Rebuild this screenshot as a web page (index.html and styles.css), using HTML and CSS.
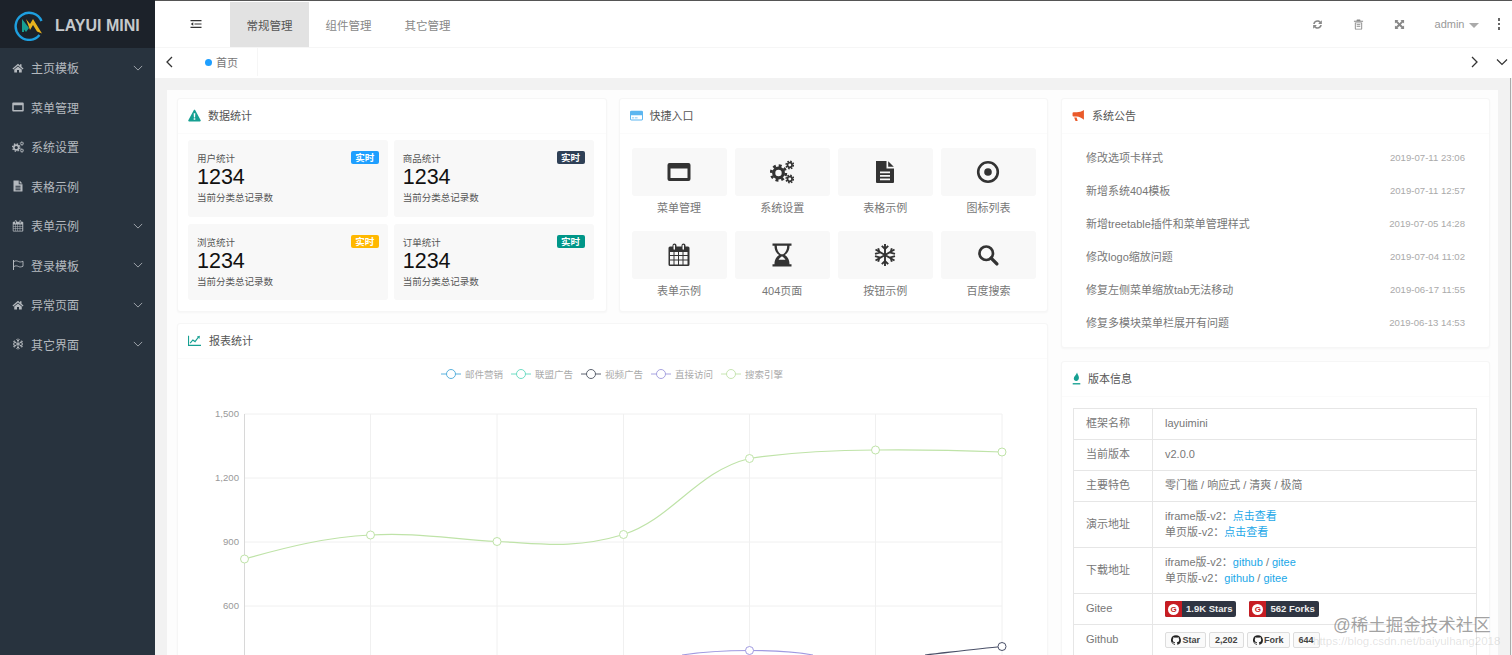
FILE: index.html
```html
<!DOCTYPE html>
<html>
<head>
    <title>layuimini</title>
    <link rel="stylesheet" href="styles.css">
</head>
<body>
    <svg class="icon-defs" xmlns="http://www.w3.org/2000/svg">
        <symbol id="i-home" viewBox="0 0 24 24"><path d="M12 3.5 1 13l1.5 1.8L12 6.8l9.5 8L23 13l-4-3.4V4.5h-3v2.5zM4.5 15.2V21h5.5v-5h4v5h5.500v-5.800L12 9z"/></symbol>
        <symbol id="i-window" viewBox="0 0 24 24"><path fill-rule="evenodd" d="M2.500 3h19A2 2 0 0 1 23.500 5v14a2 2 0 0 1-2 2h-19a2 2 0 0 1-2-2V5a2 2 0 0 1 2-2zM3.500 8.500v9.500h17V8.500z"/></symbol>
        <symbol id="i-gears" viewBox="0 0 24 24">
            <g fill="none" stroke="currentColor">
                <circle cx="8.500" cy="13" r="4.800" stroke-width="3.200"/>
                <circle cx="8.500" cy="13" r="7.300" stroke-width="2.800" stroke-dasharray="2.900 2.830"/>
                <circle cx="19.800" cy="5" r="2.300" stroke-width="1.700"/>
                <circle cx="19.800" cy="5" r="3.700" stroke-width="1.500" stroke-dasharray="1.600 1.300"/>
                <circle cx="19.800" cy="19" r="2.300" stroke-width="1.700"/>
                <circle cx="19.800" cy="19" r="3.700" stroke-width="1.500" stroke-dasharray="1.600 1.300"/>
            </g>
        </symbol>
        <symbol id="i-file" viewBox="0 0 24 24"><path fill-rule="evenodd" d="M3 1h10.500v7.500H21V22a1 1 0 0 1-1 1H4a1 1 0 0 1-1-1zM7 11.500v1.800h10v-1.800zM7 15v1.800h10V15zM7 18.500v1.800h10v-1.800z"/><path d="M15.200 1.200 20.800 6.800h-5.600z"/></symbol>
        <symbol id="i-target" viewBox="0 0 24 24"><circle cx="12" cy="12" r="9.800" fill="none" stroke="currentColor" stroke-width="2.600"/><circle cx="12" cy="12" r="3.800"/></symbol>
        <symbol id="i-calendar" viewBox="0 0 24 24"><path fill-rule="evenodd" d="M3 3.500h2.500v-1a2 2 0 0 1 4 0v1h5v-1a2 2 0 0 1 4 0v1H21a1.500 1.500 0 0 1 1.500 1.500v16.500A1.500 1.500 0 0 1 21 23H3a1.500 1.500 0 0 1-1.500-1.500V5A1.500 1.500 0 0 1 3 3.500zM6.500 2.500V6a.5.5 0 0 0 1.500 0V2.500a.5.5 0 0 0-1.500 0zM15.500 2.500V6a.5.5 0 0 0 1.500 0V2.500a.5.5 0 0 0-1.500 0zM3 9v3h3.500V9zM7.500 9v3H11V9zM12 9v3h3.500V9zM16.500 9v3H20.500V9zM3 13v3.500h3.500V13zM7.500 13v3.500H11V13zM12 13v3.500h3.500V13zM16.500 13v3.500H20.500V13zM3 17.500v4h3.500v-4zM7.500 17.500v4H11v-4zM12 17.500v4h3.500v-4zM16.500 17.500v4H20.500v-4z"/></symbol>
        <symbol id="i-hourglass" viewBox="0 0 24 24"><path fill-rule="evenodd" d="M2.500 .5h19v2.200H19.500c0 4.800-2 7.300-4.600 9.300 2.600 2 4.600 4.500 4.600 9.300h2V23.500h-19v-2.200h2c0-4.800 2-7.300 4.600-9.300-2.600-2-4.600-4.500-4.600-9.300h-2zM6.800 2.700c0 4 1.500 6.800 4 8.500h2.400c2.500-1.700 4-4.500 4-8.500zM12 13.200c-1.200.8-2.700 2-3.500 3.600h7c-.8-1.600-2.300-2.800-3.500-3.600z"/></symbol>
        <symbol id="i-snow" viewBox="0 0 24 24">
            <g fill="none" stroke="currentColor" stroke-width="1.900">
                <path d="M12 1v22M2.500 6.500l19 11M21.500 6.500l-19 11"/>
                <path d="M8.800 2.800 12 6l3.200-3.200M8.800 21.200 12 18l3.200 3.200M2 10.800l4.400-1.200L5.200 5.200M22 13.200l-4.400 1.200 1.200 4.400M22 10.800l-4.400-1.200 1.200-4.400M2 13.200l4.400 1.200-1.200 4.400"/>
            </g>
        </symbol>
        <symbol id="i-search" viewBox="-1.500 -1.500 27 27"><g fill="none" stroke="currentColor"><circle cx="10" cy="10" r="7.600" stroke-width="3"/><path d="M15.500 15.500 22 22" stroke-width="3.800" stroke-linecap="round"/></g></symbol>
        <symbol id="i-flag" viewBox="0 0 24 24"><path d="M2 2h2v20H2z"/><path fill="none" stroke="currentColor" stroke-width="1.800" d="M4 5c3-2 6-1.500 9 0s5.500 1 9-.5v10c-3.500 1.500-6 2-9 .5s-6-2-9 0"/></symbol>
        <symbol id="i-down" viewBox="0 0 24 24"><path fill="none" stroke="currentColor" stroke-width="2" d="M2 7l10 10L22 7"/></symbol>
        <symbol id="i-warn" viewBox="0 0 24 24"><path fill-rule="evenodd" d="M12 1.500c.6 0 1.100.3 1.400.8l10 18.500c.5 1-.2 2.200-1.400 2.200H2c-1.200 0-1.900-1.200-1.400-2.200l10-18.500c.3-.5.8-.8 1.400-.8zM10.500 8l.4 7.500h2.200l.4-7.500zM10.500 17v3h3v-3z"/></symbol>
        <symbol id="i-card" viewBox="0 0 24 24"><path fill-rule="evenodd" d="M2.500 3h19A2.500 2.500 0 0 1 24 5.500v13a2.500 2.500 0 0 1-2.500 2.500h-19A2.500 2.500 0 0 1 0 18.500v-13A2.500 2.500 0 0 1 2.500 3zM1.800 11.500v7c0 .4.300.7.700.7h19c.4 0 .7-.3.700-.7v-7zM3.500 15.500h4v1.800h-4zM9 15.500h5v1.800H9z"/></symbol>
        <symbol id="i-horn" viewBox="0 0 24 24"><path d="M22 2v18c-4-3.500-9-6-13-6H3a2 2 0 0 1-2-2V8a2 2 0 0 1 2-2h6c4 0 9-1 13-4zM4 15.500h4.500l2 6.500H6.500z"/></symbol>
        <symbol id="i-fire" viewBox="0 0 14 24"><path d="M8 1c.5 3.500 3.500 5.500 3.500 9.500 0 3.500-2.300 6-5 6s-4.500-2-4.500-4.500C2 8.500 6.500 6 8 1z"/><path d="M0 20.500h14V23H0z"/></symbol>
        <symbol id="i-line" viewBox="0 0 24 24"><path d="M0 3h2v17h22v2H0z"/><path fill="none" stroke="currentColor" stroke-width="2.200" d="M4 17l5-6 4 3 6-8"/><path d="M16.500 4.500 22 3l-1 6z"/></symbol>
        <symbol id="i-indent" viewBox="0 0 24 24"><path d="M1 4h22v2.500H1zM9 10.800h14v2.400H9zM1 17.500h22V20H1zM6.500 8.500v7L1.500 12z"/></symbol>
        <symbol id="i-refresh" viewBox="0 0 24 24"><path d="M12 2.500c2.700 0 5.100 1.100 6.800 2.900L21.500 2.800V11h-8.200l3-3c-1-1.200-2.600-2-4.300-2-2.900 0-5.300 2-5.900 4.700H2.500C3.200 6 7.100 2.500 12 2.500zM2.500 13h8.200l-3 3c1 1.200 2.600 2 4.300 2 2.900 0 5.300-2 5.900-4.700h3.600c-.7 4.700-4.600 8.200-9.500 8.200-2.700 0-5.100-1.100-6.800-2.900L2.500 21.200z"/></symbol>
        <symbol id="i-trash" viewBox="0 0 24 24"><path fill-rule="evenodd" d="M8.500 1h7l1 3H22v2H2V4h5.500zM4 7.500h16V21a2 2 0 0 1-2 2H6a2 2 0 0 1-2-2zM6 9.500V21h12V9.500zM8 11.500h8v2H8zM8 15h8v2H8z"/></symbol>
        <symbol id="i-expand" viewBox="0 0 24 24"><path d="M2 2h8L7.500 4.500l4.500 4.500 4.500-4.500L14 2h8v8l-2.500-2.500L15 12l4.500 4.500L22 14v8h-8l2.500-2.500L12 15l-4.500 4.500L10 22H2v-8l2.500 2.500L9 12 4.500 7.500 2 10z"/></symbol>
        <symbol id="i-github" viewBox="0 0 16 16"><path d="M8 .2a8 8 0 0 0-2.500 15.600c.4.100.5-.2.500-.4v-1.400c-2.200.5-2.700-1-2.700-1-.4-.9-.9-1.200-.9-1.200-.7-.5.100-.5.100-.5.800.1 1.200.8 1.200.8.700 1.200 1.900.9 2.300.7.100-.5.300-.9.500-1.100-1.800-.2-3.600-.9-3.600-4 0-.9.300-1.600.8-2.100-.1-.2-.4-1 .1-2.100 0 0 .7-.2 2.200.8a7.600 7.600 0 0 1 4 0c1.500-1 2.200-.8 2.200-.8.400 1.100.2 1.900.1 2.100.5.600.8 1.300.8 2.100 0 3.100-1.900 3.700-3.700 3.900.3.300.6.800.6 1.500v2.200c0 .2.100.5.600.4A8 8 0 0 0 8 .2z"/></symbol>
    </svg>

    <div class="layout">
        <aside class="sidebar">
            <div class="logo">
                <svg class="logo-mark" viewBox="0 0 30 30">
                    <path d="M27.500 10A13.500 13.500 0 1 0 25.500 24" fill="none" stroke="#1e9fdf" stroke-width="2.400"/>
                    <path d="M8 21V8l7 9 -3 4 -2-2.500V21z" fill="#17a092"/>
                    <path d="M12 8l4 5 3-5 9 14.500-5-2-4-6.500-3 5z" fill="#e8b21e"/>
                </svg>
                <span class="logo-text">LAYUI MINI</span>
            </div>
            <ul class="side-menu">
                <li class="side-item"><svg class="side-icon"><use href="#i-home"/></svg><span>主页模板</span><svg class="side-arrow"><use href="#i-down"/></svg></li>
                <li class="side-item"><svg class="side-icon"><use href="#i-window"/></svg><span>菜单管理</span></li>
                <li class="side-item"><svg class="side-icon"><use href="#i-gears"/></svg><span>系统设置</span></li>
                <li class="side-item"><svg class="side-icon"><use href="#i-file"/></svg><span>表格示例</span></li>
                <li class="side-item"><svg class="side-icon"><use href="#i-calendar"/></svg><span>表单示例</span><svg class="side-arrow"><use href="#i-down"/></svg></li>
                <li class="side-item"><svg class="side-icon"><use href="#i-flag"/></svg><span>登录模板</span><svg class="side-arrow"><use href="#i-down"/></svg></li>
                <li class="side-item"><svg class="side-icon"><use href="#i-home"/></svg><span>异常页面</span><svg class="side-arrow"><use href="#i-down"/></svg></li>
                <li class="side-item"><svg class="side-icon"><use href="#i-snow"/></svg><span>其它界面</span><svg class="side-arrow"><use href="#i-down"/></svg></li>
            </ul>
        </aside>

        <div class="main">
            <header class="topbar">
                <div class="toggle"><svg class="toggle-icon"><use href="#i-indent"/></svg></div>
                <a class="top-tab active">常规管理</a>
                <a class="top-tab">组件管理</a>
                <a class="top-tab">其它管理</a>
                <div class="top-right">
                    <svg class="top-icon"><use href="#i-refresh"/></svg>
                    <svg class="top-icon"><use href="#i-trash"/></svg>
                    <svg class="top-icon"><use href="#i-expand"/></svg>
                    <span class="admin">admin<i class="caret"></i></span>
                    <span class="dots"><i></i><i></i><i></i></span>
                </div>
            </header>

            <div class="tabbar">
                <div class="tab-prev"><svg viewBox="0 0 12 12"><path d="M8 1 3 6l5 5" fill="none" stroke="currentColor" stroke-width="1.300"/></svg></div>
                <div class="home-tab"><i class="dot"></i>首页</div>
                <div class="tab-next"><svg viewBox="0 0 12 12"><path d="M4 1l5 5-5 5" fill="none" stroke="currentColor" stroke-width="1.300"/></svg></div>
                <div class="tab-down"><svg viewBox="0 0 12 12"><path d="M1 3.500l5 5 5-5" fill="none" stroke="currentColor" stroke-width="1.200"/></svg></div>
            </div>

            <div class="content">
                <div class="panel">
                    <div class="left-col">
                        <div class="top-cards">
                            <section class="card">
                                <div class="card-head"><svg class="head-icon teal"><use href="#i-warn"/></svg>数据统计</div>
                                <div class="stats">
                                    <div class="stat">
                                        <span class="badge blue">实时</span>
                                        <div class="stat-title">用户统计</div>
                                        <div class="stat-num">1234</div>
                                        <div class="stat-sub">当前分类总记录数</div>
                                    </div>
                                    <div class="stat">
                                        <span class="badge navy">实时</span>
                                        <div class="stat-title">商品统计</div>
                                        <div class="stat-num">1234</div>
                                        <div class="stat-sub">当前分类总记录数</div>
                                    </div>
                                    <div class="stat">
                                        <span class="badge yellow">实时</span>
                                        <div class="stat-title">浏览统计</div>
                                        <div class="stat-num">1234</div>
                                        <div class="stat-sub">当前分类总记录数</div>
                                    </div>
                                    <div class="stat">
                                        <span class="badge green">实时</span>
                                        <div class="stat-title">订单统计</div>
                                        <div class="stat-num">1234</div>
                                        <div class="stat-sub">当前分类总记录数</div>
                                    </div>
                                </div>
                            </section>

                            <section class="card">
                                <div class="card-head"><svg class="head-icon blue-text"><use href="#i-card"/></svg>快捷入口</div>
                                <div class="shortcuts">
                                    <a class="shortcut"><span class="tile"><svg class="tile-icon"><use href="#i-window"/></svg></span>菜单管理</a>
                                    <a class="shortcut"><span class="tile"><svg class="tile-icon"><use href="#i-gears"/></svg></span>系统设置</a>
                                    <a class="shortcut"><span class="tile"><svg class="tile-icon"><use href="#i-file"/></svg></span>表格示例</a>
                                    <a class="shortcut"><span class="tile"><svg class="tile-icon"><use href="#i-target"/></svg></span>图标列表</a>
                                    <a class="shortcut"><span class="tile"><svg class="tile-icon"><use href="#i-calendar"/></svg></span>表单示例</a>
                                    <a class="shortcut"><span class="tile"><svg class="tile-icon"><use href="#i-hourglass"/></svg></span>404页面</a>
                                    <a class="shortcut"><span class="tile"><svg class="tile-icon"><use href="#i-snow"/></svg></span>按钮示例</a>
                                    <a class="shortcut"><span class="tile"><svg class="tile-icon"><use href="#i-search"/></svg></span>百度搜索</a>
                                </div>
                            </section>
                        </div>

                        <section class="card chart-card">
                            <div class="card-head"><svg class="head-icon teal"><use href="#i-line"/></svg><span class="chart-title">报表统计</span></div>
                            <svg class="chart" viewBox="0 0 871 296">
                                <g class="grid-lines">
                                    <path d="M67.500 55H825M67.500 119H825M67.500 183H825M67.500 247H825"/>
                                    <path d="M193.500 55V296M320 55V296M446.500 55V296M572.500 55V296M698.500 55V296M825 55V296"/>
                                </g>
                                <path class="axis" d="M67.500 55V296"/>
                                <g class="axis-text">
                                    <text x="62" y="58">1,500</text>
                                    <text x="62" y="122">1,200</text>
                                    <text x="62" y="186">900</text>
                                    <text x="62" y="250">600</text>
                                </g>

                                <g class="legend">
                                    <path d="M264 15h20" stroke="#5ab1dd"/><circle cx="274" cy="15" r="4.500" stroke="#5ab1dd"/><text x="288" y="18.500">邮件营销</text>
                                    <path d="M334 15h20" stroke="#6fdcc4"/><circle cx="344" cy="15" r="4.500" stroke="#6fdcc4"/><text x="358" y="18.500">联盟广告</text>
                                    <path d="M404 15h20" stroke="#5c6370"/><circle cx="414" cy="15" r="4.500" stroke="#5c6370"/><text x="428" y="18.500">视频广告</text>
                                    <path d="M474 15h20" stroke="#a7a3e0"/><circle cx="484" cy="15" r="4.500" stroke="#a7a3e0"/><text x="498" y="18.500">直接访问</text>
                                    <path d="M544 15h20" stroke="#c7e5b2"/><circle cx="554" cy="15" r="4.500" stroke="#c7e5b2"/><text x="568" y="18.500">搜索引擎</text>
                                </g>

                                <path class="series green-line" d="M67.500 200C110 188 150 178 193.500 176C235 173 275 180 320 182.500C360 184 395 191 446.500 175.500C495 160 520 112 572.500 99.500C615 93 655 91 698.500 91C740 90.500 785 91.500 825 93"/>
                                <g class="points green-line">
                                    <circle cx="67.500" cy="200" r="4"/>
                                    <circle cx="193.500" cy="176" r="4"/>
                                    <circle cx="320" cy="182.500" r="4"/>
                                    <circle cx="446.500" cy="175.500" r="4"/>
                                    <circle cx="572.500" cy="99.500" r="4"/>
                                    <circle cx="698.500" cy="91" r="4"/>
                                    <circle cx="825" cy="93" r="4"/>
                                </g>
                                <path class="series purple-line" d="M505 296C530 292 550 291.500 572.500 291.500C595 291.500 615 292 636 296"/>
                                <circle class="points purple-line" cx="572.500" cy="291.500" r="4"/>
                                <path class="series dark-line" d="M748 296C775 293 800 290 825 287.500"/>
                                <circle class="points dark-line" cx="825" cy="287.500" r="4"/>
                            </svg>
                        </section>
                    </div>

                    <div class="right-col">
                        <section class="card">
                            <div class="card-head"><svg class="head-icon orange"><use href="#i-horn"/></svg>系统公告</div>
                            <ul class="notices">
                                <li class="notice"><span>修改选项卡样式</span><span class="notice-date">2019-07-11 23:06</span></li>
                                <li class="notice"><span>新增系统404模板</span><span class="notice-date">2019-07-11 12:57</span></li>
                                <li class="notice"><span>新增treetable插件和菜单管理样式</span><span class="notice-date">2019-07-05 14:28</span></li>
                                <li class="notice"><span>修改logo缩放问题</span><span class="notice-date">2019-07-04 11:02</span></li>
                                <li class="notice"><span>修复左侧菜单缩放tab无法移动</span><span class="notice-date">2019-06-17 11:55</span></li>
                                <li class="notice"><span>修复多模块菜单栏展开有问题</span><span class="notice-date">2019-06-13 14:53</span></li>
                            </ul>
                        </section>

                        <section class="card">
                            <div class="card-head"><svg class="head-icon head-icon-thin teal"><use href="#i-fire"/></svg>版本信息</div>
                            <div class="version">
                                <table class="info-table">
                                    <tr><td class="info-key">框架名称</td><td>layuimini</td></tr>
                                    <tr><td class="info-key">当前版本</td><td>v2.0.0</td></tr>
                                    <tr><td class="info-key">主要特色</td><td>零门槛 / 响应式 / 清爽 / 极简</td></tr>
                                    <tr><td class="info-key">演示地址</td><td>iframe版-v2：<a>点击查看</a><br>单页版-v2：<a>点击查看</a></td></tr>
                                    <tr><td class="info-key">下载地址</td><td>iframe版-v2：<a>github</a> / <a>gitee</a><br>单页版-v2：<a>github</a> / <a>gitee</a></td></tr>
                                    <tr>
                                        <td class="info-key">Gitee</td>
                                        <td class="badge-cell">
                                            <span class="gitee-badge"><span class="gitee-g"><b>G</b></span><span class="gitee-text">1.9K Stars</span></span>
                                            <span class="gitee-badge"><span class="gitee-g"><b>G</b></span><span class="gitee-text">562 Forks</span></span>
                                        </td>
                                    </tr>
                                    <tr>
                                        <td class="info-key">Github</td>
                                        <td class="badge-cell">
                                            <span class="gh-btn"><svg class="gh-icon"><use href="#i-github"/></svg>Star</span>
                                            <span class="gh-btn">2,202</span>
                                            <span class="gh-btn"><svg class="gh-icon"><use href="#i-github"/></svg>Fork</span>
                                            <span class="gh-btn">644</span>
                                        </td>
                                    </tr>
                                </table>
                            </div>
                        </section>
                    </div>
                </div>
            </div>
        </div>
    </div>

    <div class="scroll-line"></div>
    <div class="watermark">@稀土掘金技术社区</div>
    <div class="watermark-url">https://blog.csdn.net/baiyulhang2018</div>
</body>
</html>
```

FILE: styles.css
```css
* {
    box-sizing: border-box;
}

html, body {
    margin: 0;
    padding: 0;
    height: 100%;
    overflow: hidden;
}

body {
    font-family: "Liberation Sans", "Noto Sans CJK SC", sans-serif;
    font-size: 11px;
    color: #666;
    background-color: #fff;
}

ul {
    list-style: none;
    margin: 0;
    padding: 0;
}

svg {
    fill: currentColor;
}

.icon-defs {
    display: none;
}

.layout {
    display: flex;
    height: 655px;
}

/* sidebar */
.sidebar {
    width: 155px;
    flex-shrink: 0;
    background-color: #28333e;
    color: #b4b9be;
}

.logo {
    height: 48px;
    display: flex;
    align-items: center;
    padding: 3px 0 0 14px;
    background-color: #1c222a;
}

.logo-mark {
    width: 30px;
    height: 30px;
}

.logo-text {
    margin-left: 11px;
    font-size: 16px;
    font-weight: bold;
    color: #c6c9cc;
}

.side-item {
    height: 39.5px;
    display: flex;
    align-items: center;
    padding-left: 12px;
    font-size: 12px;
}

.side-icon {
    width: 12px;
    height: 12px;
    margin-right: 7px;
}

.side-arrow {
    width: 10px;
    height: 10px;
    margin-left: auto;
    margin-right: 12px;
}

/* top bar */
.main {
    flex: 1;
    min-width: 0;
    display: flex;
    flex-direction: column;
}

.topbar {
    height: 48px;
    display: flex;
    border-top: 1px solid #555;
    border-bottom: 1px solid #f6f6f6;
    background-color: #fff;
}

.toggle {
    width: 75px;
    padding-left: 35px;
    display: flex;
    align-items: center;
    color: #333;
}

.toggle-icon {
    width: 12px;
    height: 12px;
}

.top-tab {
    width: 79px;
    display: flex;
    align-items: center;
    justify-content: center;
    margin-top: 1px;
    font-size: 11.500px;
    color: #888;
}

.top-tab.active {
    background-color: #e2e2e2;
    color: #555;
}

.top-right {
    margin-left: auto;
    display: flex;
    align-items: center;
    color: #888;
}

.top-icon {
    width: 11px;
    height: 11px;
    margin-right: 30px;
}

.admin {
    font-size: 11px;
    color: #999;
}

.caret {
    display: inline-block;
    margin-left: 4px;
    border: 5px solid transparent;
    border-top-color: #aaa;
    border-bottom: none;
    vertical-align: middle;
}

.dots {
    display: flex;
    flex-direction: column;
    gap: 2px;
    margin-left: 19px;
    margin-right: 12px;
}

.dots i {
    width: 2.500px;
    height: 2.500px;
    background-color: #666;
}

/* tab strip */
.tabbar {
    height: 30px;
    display: flex;
    align-items: center;
    padding-bottom: 2px;
    background-color: #fff;
    color: #333;
}

.tabbar svg {
    width: 12px;
    height: 12px;
    display: block;
}

.tab-prev {
    width: 30px;
    padding-left: 9px;
}

.home-tab {
    width: 73px;
    height: 100%;
    display: flex;
    align-items: center;
    padding-left: 20px;
    border-right: 1px solid #f6f6f6;
    color: #777;
}

.dot {
    width: 7px;
    height: 7px;
    margin-right: 4px;
    border-radius: 50%;
    background-color: #1e9fff;
}

.tab-next {
    margin-left: auto;
}

.tab-down {
    margin-left: 16px;
    margin-right: 4px;
}

/* content */
.content {
    flex: 1;
    min-height: 0;
    padding: 12px 14px 0 12px;
    background-color: #f2f2f2;
}

.panel {
    height: 100%;
    display: grid;
    grid-template-columns: 1fr 429px;
    gap: 13px;
    padding: 8px 8px 0 10px;
    background-color: #fdfdfd;
    overflow: hidden;
}

.left-col, .right-col {
    display: flex;
    flex-direction: column;
    min-width: 0;
}

.left-col {
    gap: 11px;
}

.right-col {
    gap: 13px;
}

.top-cards {
    display: grid;
    grid-template-columns: 1fr 1fr;
    gap: 12px;
}

.card {
    background-color: #fff;
    border: 1px solid #f6f6f6;
    border-radius: 3px;
    box-shadow: 0 1px 2px rgba(0, 0, 0, 0.03);
}

.card-head {
    height: 35px;
    display: flex;
    align-items: center;
    padding: 0 0 2px 10px;
    font-size: 11px;
    color: #555;
    border-bottom: 1px solid #fbfbfb;
}

.head-icon {
    width: 13px;
    height: 13px;
    margin-right: 7px;
}

.head-icon-thin {
    width: 9px;
}

.chart-title {
    margin-left: 1px;
}

.teal { color: #16a092; }
.blue-text { color: #5cb6f0; }
.orange { color: #ea5a2a; }

/* stat boxes */
.stats {
    display: grid;
    grid-template-columns: 1fr 1fr;
    grid-template-rows: 77px 76px;
    gap: 7px 6px;
    padding: 6px 12px 11px 10px;
}

.stat {
    position: relative;
    padding: 12px 9px 0;
    background-color: #f8f8f8;
    border-radius: 3px;
}

.stat-title {
    font-size: 9.500px;
    line-height: 13px;
    color: #555;
}

.stat-num {
    font-size: 21.500px;
    line-height: 25px;
    color: #111;
}

.stat-sub {
    margin-top: 1px;
    font-size: 9.500px;
    line-height: 14px;
    color: #555;
}

.badge {
    position: absolute;
    top: 11px;
    right: 9px;
    width: 28px;
    height: 13px;
    border-radius: 2px;
    font-size: 9.500px;
    line-height: 13px;
    font-weight: bold;
    text-align: center;
    color: #fff;
}

.badge.blue { background-color: #1e9fff; }
.badge.navy { background-color: #2f4056; }
.badge.yellow { background-color: #ffb800; }
.badge.green { background-color: #009688; }

/* shortcuts */
.shortcuts {
    display: grid;
    grid-template-columns: repeat(4, 1fr);
    gap: 11.500px 8px;
    padding: 14px 11px 0 12px;
}

.shortcut {
    display: block;
    text-align: center;
    font-size: 11px;
    line-height: 22px;
    color: #777;
}

.tile {
    height: 48px;
    margin-bottom: 1px;
    display: flex;
    align-items: center;
    justify-content: center;
    background-color: #f8f8f8;
    border-radius: 3px;
    color: #333;
}

.tile-icon {
    width: 24px;
    height: 24px;
}

/* chart */
.chart-card {
    height: 345px;
    flex-shrink: 0;
    overflow: hidden;
}

.chart {
    display: block;
    width: 871px;
    height: 296px;
    margin-left: -1px;
}

.grid-lines path {
    fill: none;
    stroke: #f0f0f0;
    stroke-width: 1;
}

.axis {
    fill: none;
    stroke: #d8d8d8;
    stroke-width: 1;
}

.axis-text text {
    font-size: 9.600px;
    text-anchor: end;
    fill: #999;
}

.legend path {
    stroke-width: 1;
    fill: none;
}

.legend circle {
    fill: #fff;
    stroke-width: 1;
}

.legend text {
    font-size: 9.500px;
    fill: #aaa;
}

.series {
    fill: none;
    stroke-width: 1.200;
}

.points circle, circle.points {
    fill: #fff;
    stroke-width: 1;
}

.green-line { stroke: #bfe3a8; }
.purple-line { stroke: #a09ae0; }
.dark-line { stroke: #4a5068; }

/* notices */
.notices {
    padding: 6px 24px 9px;
}

.notice {
    height: 33px;
    display: flex;
    align-items: center;
    justify-content: space-between;
    font-size: 11px;
    color: #777;
}

.notice-date {
    padding-top: 2px;
    font-size: 9.600px;
    color: #aaa;
}

/* version table */
.version {
    padding: 11px 12px 0 11px;
}

.info-table {
    width: 100%;
    border-collapse: collapse;
    font-size: 11px;
    line-height: 15.500px;
    color: #777;
}

.info-table td {
    height: 31px;
    padding: 7px 12px;
    border: 1px solid #e6e6e6;
}

.info-key {
    width: 79px;
}

.info-table a {
    color: #1aa7e8;
}

.info-table .badge-cell {
    padding-top: 0;
    padding-bottom: 0;
    font-size: 0;
    line-height: 0;
    white-space: nowrap;
}

.gitee-badge {
    display: inline-flex;
    height: 16px;
    margin-right: 13px;
    border-radius: 2px;
    overflow: hidden;
    font-size: 9.500px;
    font-weight: bold;
    line-height: 16px;
    vertical-align: middle;
    color: #eee;
    background-color: #2f3542;
}

.gitee-g {
    width: 17px;
    display: flex;
    align-items: center;
    justify-content: center;
    background-color: #c71d23;
}

.gitee-g b {
    width: 11px;
    height: 11px;
    border-radius: 50%;
    background-color: #fff;
    color: #c71d23;
    font-size: 8px;
    line-height: 11px;
    text-align: center;
}

.gitee-text {
    padding: 0 4px;
}

.gh-btn {
    display: inline-flex;
    align-items: center;
    height: 16px;
    margin-right: 3px;
    padding: 0 5px;
    border: 1px solid #ddd;
    border-radius: 2px;
    background-color: #fafafa;
    font-size: 9px;
    font-weight: bold;
    line-height: 14px;
    color: #444;
    vertical-align: middle;
}

.gh-icon {
    width: 10px;
    height: 10px;
    margin-right: 1.500px;
    color: #222;
}

/* overlays */
.scroll-line {
    position: absolute;
    left: 1510px;
    top: 78px;
    width: 1px;
    height: 577px;
    background-color: #aaa;
}

.watermark {
    position: absolute;
    left: 1333px;
    top: 612px;
    font-size: 17.500px;
    line-height: 26px;
    color: rgba(100, 100, 100, 0.6);
    white-space: nowrap;
}

.watermark-url {
    position: absolute;
    left: 1313px;
    top: 634px;
    font-size: 11.500px;
    line-height: 15px;
    color: rgba(130, 130, 130, 0.22);
    white-space: nowrap;
}
```
